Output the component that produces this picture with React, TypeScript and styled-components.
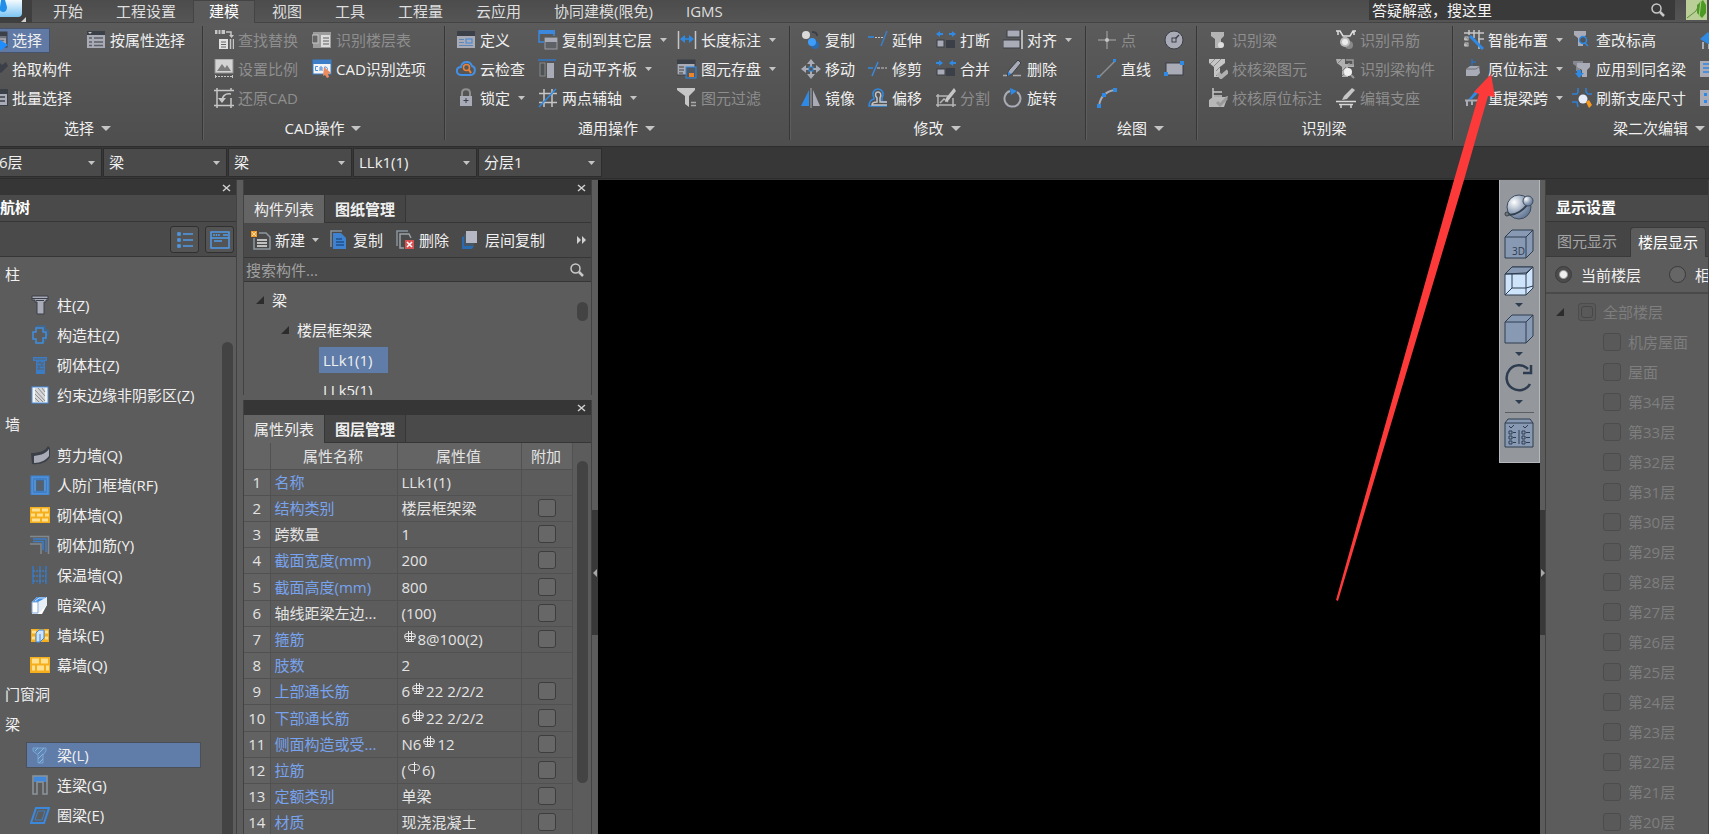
import React from "react";
import styled, { createGlobalStyle, css } from "styled-components";

const GlobalStyle = createGlobalStyle`
  *, *::before, *::after { box-sizing: border-box; }
  body {
    margin: 0;
    overflow: hidden;
    background: #373737;
    color: #f0f0f0;
    font: 15px/20px "Open Sans", "Noto Sans CJK SC", sans-serif;
  }
  button, input, select { font: inherit; color: inherit; margin: 0; }
  ul { list-style: none; margin: 0; padding: 0; }
  svg { display: block; flex: none; }
`;

/* ---------- icons ---------- */

const G = "#a9abb6";
const L = "#c6c6c6";
const B = "#2f8ae6";
const D = "#3b3f47";
const Y = "#f5ae1c";

const line = (d: string, stroke = L, w = 1.5) => (
  <path d={d} fill="none" stroke={stroke} strokeWidth={w} />
);
const box = (x: number, y: number, w: number, h: number, fill = G, stroke = "none") => (
  <rect x={x} y={y} width={w} height={h} fill={fill} stroke={stroke} />
);

const icons: Record<string, React.ReactNode> = {
  pick: (
    <>
      {box(0, 2, 19, 15, "#6c7078", D)}
      {box(0, 2, 19, 4, D)}
      {line("M2 9h16M10 12h8M17 9v6", G)}
      <path d="M12 10l8 5-8 6z" fill="#1e8dff" />
    </>
  ),
  brush: (
    <path d="M0 19l7-9 3 3-8 7zM8 8l3-5 3 3 4-3 2 4-4 4-3 3-5-4z" fill={D} />
  ),
  batch: (
    <>
      {box(0, 1, 20, 17, D)}
      {box(0, 6, 19, 11)}
      {line("M0 9h17M0 13h17", D)}
    </>
  ),
  props: (
    <>
      {box(1, 1, 18, 17, G)}
      {box(1, 1, 18, 4, D)}
      {line("M3 8h3M8 8h9M3 12h3M8 12h9M3 15.500h3M8 15.500h9", "#5c5f66")}
      <path d="M2 2h4L4 4z" fill={L} />
    </>
  ),
  replace: (
    <>
      {box(1, 0, 10, 4, L)}
      {line("M4 0v4M7 0v4", "#777")}
      {line("M12 2h5v4")}
      <path d="M15 5h5l-2.500 3z" fill={L} />
      {box(5, 9, 9, 10, "#e2e2e2")}
      {line("M7 12h5M7 14.500h5M7 17h5", "#666", 1)}
      {line("M16.500 9v10M19.500 9v10")}
    </>
  ),
  scale: (
    <>
      {box(1, 0, 18, 14, "#d4d4d4", "#8f8f8f")}
      <path d="M3 12l5-7 3 4 2-3 4 6z" fill="#7d7d7d" />
      <path d="M1 17.500h18" stroke={L} strokeDasharray="2 1" />
      {line("M1.500 16v3M18.500 16v3", L, 1)}
    </>
  ),
  restore: (
    <>
      {line("M3 0v20M0 2.500h20M0 17.500h20M17 10v10M17 0v3", L, 1.5)}
      {line("M8 14c0-6 3-9 9-8")}
      <path d="M4 10h8l-4 5z" fill={L} />
    </>
  ),
  floorTable: (
    <>
      {box(1, 2, 18, 16, "#9c9c9c")}
      {box(9, 5, 9, 12, "#dcdcdc")}
      {line("M11 8h6M11 11h6M11 14h6", "#888")}
      {box(0, 5, 6, 8, "#666", L)}
    </>
  ),
  cad: (
    <>
      {box(1, 1, 18, 14, "#f4f4f4", "#3c7fc8")}
      {box(1, 1, 18, 4, "#3c7fc8")}
      {line("M6 7.500H3.500v4H6M8 12V8h2v4M8 10h2M12.500 8h1.500c2 1 2 3 0 4h-1.500z", "#4a90e2", 1)}
      <path d="M12 8l7 6-3 1 1 3-2 1-2-3-2 1z" fill="#ec8b5e" />
    </>
  ),
  define: (
    <>
      {box(1, 1, 18, 17, G)}
      {box(1, 1, 18, 5, D)}
      {line("M3 9.500h5M3 12.500h5M3 15.500h14", "#5e87b8", 1)}
      {box(10, 9, 6, 4, "none", "#3c88dd")}
    </>
  ),
  cloud: (
    <>
      {line("M5 16c-6-1-5-8 0-8 1-6 9-7 11-1 4 1 4 8-1 9z", "#4390e6", 2)}
      <circle cx="10.500" cy="8.500" r="3" fill="none" stroke="#f08336" strokeWidth="1.500" />
      {line("M13 11l2 3", "#f08336", 2)}
    </>
  ),
  lock: (
    <>
      {line("M6 8V5c0-5 8-5 8 0v3", "#909090", 2)}
      {box(4, 8, 12, 10)}
      {line("M10 10v5M7.500 12.500h5", D, 1)}
    </>
  ),
  copyFloor: (
    <>
      {line("M6 12H1V1h15v5", "#3c88dd", 1.5)}
      {box(1, 0, 16, 4, "#3c88dd")}
      {box(7, 8, 12, 11, "#5e6266", "#9a9ca5")}
      {box(7, 8, 12, 4, G)}
    </>
  ),
  alignSlab: (
    <>
      {line("M0 1h18", "#2e77c8")}
      {box(2, 4, 5, 13, "#505356", "#888")}
      {box(9, 4, 7, 15)}
    </>
  ),
  axis: (
    <>
      {line("M6 1v18M14 1v18M1 5.500h18M1 14.500h18", L)}
      {line("M1 19L18 1", B)}
    </>
  ),
  length: (
    <>
      {line("M1.500 1v18M18.500 1v18", L)}
      {line("M5 9h10", B)}
      <path d="M3 9l5-4v8zM17 9l-5-4v8z" fill={B} />
    </>
  ),
  save: (
    <>
      {box(0, 1, 18, 15, G, D)}
      {box(0, 1, 18, 4, D)}
      {line("M2 8h5M2 11h5M2 14h4", "#666")}
      {box(9, 8, 10, 11, "#4f5a66", B)}
      {box(12, 14, 5, 4, "#f08326")}
    </>
  ),
  filter: (
    <>
      <path d="M0 0h18v2l-6 6v11l-4-3V8L0 2z" fill={L} />
      {line("M14 14.500h5M14 17.500h5", "#aaa")}
    </>
  ),
  copyBalls: (
    <>
      <circle cx="5" cy="5" r="4" fill="#dadada" />
      {line("M11 2c4 0 5 1 5 4", D, 2)}
      <circle cx="14" cy="15" r="4" fill="#2a6bb0" />
      <circle cx="11" cy="12" r="4" fill="#3f9dfa" />
    </>
  ),
  move: (
    <>
      <path d="M10 0l4 5h-3v3H9V5H6zM10 20l4-5h-3v-3H9v3H6zM0 10l5-4v3h3v2H5v3zM20 10l-5-4v3h-3v2h3v3z" fill={G} />
      {box(8, 8, 4, 4, "#555", B)}
    </>
  ),
  mirror: (
    <>
      <path d="M8 2v16H0z" fill={B} />
      <path d="M12 2v16h7z" fill={G} />
      {line("M10 0v20", "#aaa", 1)}
    </>
  ),
  extend: (
    <>
      {line("M0 7h6", B)}
      <path d="M7 7.500h10" stroke={L} strokeDasharray="2 1" />
      {line("M19 1l-6 15", "#3c7fc8")}
    </>
  ),
  trim: (
    <>
      {line("M0 9h5", B)}
      {line("M10 3L4 17", "#3c88dd")}
      <path d="M9 9h10" stroke={L} strokeDasharray="3 1" />
    </>
  ),
  offset: (
    <>
      {line("M19 14h-5v-4c3-6-1-9-4-9s-7 3-4 9v1c-4 1-5 3-5 7h18", B)}
      {line("M19 17H4c0-2 1-3 5-3v-4c-3-4-1-6 1-6s4 2 2 6v4h7", L)}
    </>
  ),
  breakIt: (
    <>
      <path d="M0 4l4-3v2h3v2H4v2zM20 4l-4-3v2h-3v2h3v2z" fill={B} />
      {box(1, 10, 7, 7, G, D)}
      {box(10, 10, 9, 8, D)}
    </>
  ),
  merge: (
    <>
      <path d="M7 4L3 1v2H0v2h3v2zM13 4l4-3v2h3v2h-3v2z" fill={B} />
      {box(1, 10, 8, 6, G, D)}
      {box(10, 9, 9, 8, D)}
    </>
  ),
  split: (
    <>
      {line("M2 6v13M0 8h12M0 17h20M17 10v9M4 15l4-4 4 3", "#b5b5b5")}
      <path d="M18 0l2 3-8 10-3 1 1-4z" fill={L} />
    </>
  ),
  align: (
    <>
      {box(4, 0, 13, 7, G, D)}
      {box(0, 10, 17, 8, G, D)}
      {line("M19 0v19", "#d5d5d5")}
    </>
  ),
  erase: (
    <>
      <path d="M15 1l3 3-9 11-5 2 2-6z" fill={G} stroke={D} />
      <path d="M5 12l3 3-3 2z" fill={B} />
      {line("M0 16.500h4M10 16.500h8", "#aaa")}
    </>
  ),
  rotate: (
    <>
      {line("M7 3a8 8 0 1 0 7 1", G, 2)}
      <path d="M7 0l7 3-6 4z" fill={B} />
    </>
  ),
  point: (
    <>
      {line("M10 1v18M1 10h18", "#909090")}
      <circle cx="10" cy="10" r="2" fill={L} />
    </>
  ),
  lineTool: (
    <>
      {line("M2 18L18 2", "#8c8f94")}
      {box(0, 16, 3, 3, B)}
      {box(16, 0, 3, 3, B)}
    </>
  ),
  arc: (
    <>
      {line("M2 18C3 9 9 3 18 2", G, 2)}
      {box(0, 16, 4, 4, B)}
      {box(5, 5, 4, 4, B)}
      {box(16, 0, 4, 4, B)}
    </>
  ),
  circle: (
    <>
      <circle cx="10" cy="10" r="9" fill={G} stroke={D} />
      {line("M10 10l5-5", D)}
      {box(8, 8, 4, 4, G, D)}
    </>
  ),
  rect: (
    <>
      {box(2, 4, 17, 12, G, D)}
      {box(0, 13, 4, 4, B)}
      {box(16, 2, 4, 4, B)}
    </>
  ),
  idBeam: (
    <>
      <path d="M3 2h13v4l-3 3v9H7V9L3 6z" fill="#b4b4b4" />
      <circle cx="13" cy="15" r="3" fill="#dedede" />
    </>
  ),
  checkBeam: (
    <>
      <path d="M1 0h16v4l-5 4v10H6V8L1 4z" fill={L} />
      {line("M2 5l5-5M6 7l7-7M8 12l5-5M8 17l4-4", "#8a8a8a", 1)}
      {line("M10 14l3 4 7-6", "#b0b0b0", 4)}
    </>
  ),
  checkMark: (
    <>
      {line("M5 0v11M5 4h9M5 8h9", L)}
      <path d="M1 12l4-3h12l3-1-4 11H1z" fill="#b8b8b8" />
      {line("M9 14l3 3 7-7", "#9a9a9a", 3)}
    </>
  ),
  idHanger: (
    <>
      {line("M0 1h4l3 5h7l3-5h3M2 1v4M18 1v4", "#dedede")}
      <circle cx="13" cy="15" r="4" fill="#8a8a8a" />
      <circle cx="9" cy="12" r="5" fill="#bdbdbd" />
      <circle cx="9" cy="12" r="3" fill="#ececec" />
    </>
  ),
  idMember: (
    <>
      <path d="M0 0h9v5h9v3h-6v10H6V8L1 4z" fill="#b0b0b0" />
      {line("M10 1h7v5h-4V4", "#9a9a9a")}
      {line("M1 5l5-5M6 12l4-4M6 17l4-4", "#7e7e7e", 1)}
      <circle cx="12" cy="13" r="4" fill="#efefef" />
      {line("M15 16l3 3", "#9a9a9a", 2)}
    </>
  ),
  support: (
    <>
      <path d="M16 0l3 2-8 9-5 1 2-4z" fill={L} />
      {line("M0 13.500h20M3 16.500h14M5 16v4M15 16v4", "#d8d8d8")}
    </>
  ),
  smart: (
    <>
      {line("M5 0v5M10 0v5M15 0v19M0 3h20M0 9h3M14 9h6M0 15h3M10 0v8", L)}
      {box(1, 7, 3, 3, "none", L)}
      {box(1, 13, 3, 3, "none", L)}
      {line("M6 6l13 13", B, 3)}
    </>
  ),
  origin: (
    <>
      {line("M8 0v8M8 3h4", "#2f6fb5")}
      <path d="M2 10l4-3h9l1 7-3 3H2z" fill={G} />
      <path d="M2 10h10l4-3" fill="none" stroke="#6d7078" />
    </>
  ),
  respan: (
    <>
      <path d="M14 0l3 2-9 9-4 1z" fill={B} />
      {line("M1 12.500h18M3 13v5M8 13v4M14 13v5", G, 2)}
    </>
  ),
  elevation: (
    <>
      <path d="M2 1h12v4l-3 3v8H6V8L2 5z" fill={G} />
      <circle cx="11" cy="10" r="3.500" fill="#4f555c" stroke={B} strokeWidth="1.500" />
      {line("M13 13l3 3", B)}
    </>
  ),
  applySame: (
    <>
      <path d="M1 2h10v3l-3 2v5H4V7L1 5z" fill="#858890" />
      <path d="M5 4h13v4l-3 3v7h-5v-7L5 8z" fill={G} />
      <path d="M5 11h4v3h3l-5 5-4-5h2z" fill={B} />
    </>
  ),
  refresh: (
    <>
      {line("M6 0v4l-1 2H0M14 0v4l2 2h4M0 14h5l1 5", "#2f7fd6")}
      <circle cx="11" cy="11" r="4.500" fill="#e6ecfa" />
      <path d="M14 14l3-2 3 5-3 3z" fill="#f79a1e" />
    </>
  ),
  wing: (
    <>
      <path d="M0 9l8-7 7 8-5 5z" fill={B} />
      {line("M3 12v7M9 14v5", G, 2)}
    </>
  ),
  sheet: (
    <>
      {box(0, 2, 16, 16, G)}
      {line("M3 5h13M3 9h13M3 13h13", "#4d8fd8", 2)}
    </>
  ),
  dots: (
    <>
      {box(0, 2, 16, 16, G)}
      {box(4, 5, 3, 3, B)}
      {box(4, 12, 3, 3, B)}
    </>
  ),
  column: (
    <>
      <path d="M2 1h16v4h-2v2h-2v12H7V7H5V5H2z" fill={G} stroke={D} />
      {line("M2 3.500h16M6 5.500h8", D, 1)}
    </>
  ),
  structColumn: (
    <>
      {line("M7 3V1h8v4h3v5h-2v5l-2 2", "#2f6fb5", 1)}
      {line("M6 3h7v4h3v6h-3v5H6v-4H3V7h3z", "#3f8fe0", 1.5)}
    </>
  ),
  brickColumn: (
    <>
      <path d="M3 2h14v4h-2v13H6V6H3z" fill="#3b7cc4" />
      {line("M4 4h12M7 8h7M7 11h7M7 14h7M10 6v2M12 8v3M9 11v3", "#59636d", 1)}
    </>
  ),
  region: (
    <>
      {box(2, 2, 16, 16, "#f4f4f4", "#4a90e2")}
      {box(5, 3, 10, 14, "#d5d7d9")}
      {line("M5 5l10 11M5 9l8 8M5 13l4 4M8 3l7 8M12 3l3 4", "#8b8f93", 1)}
    </>
  ),
  shearWall: (
    <>
      <path d="M1 8c9 0 14-2 17-7l2 2v9c-3 5-9 8-18 7z" fill={D} />
      <path d="M4 11c8-1 12-3 15-7v7c-3 4-8 7-15 7z" fill={G} />
    </>
  ),
  civilWall: (
    <>
      {box(1, 1, 18, 19, "#4f8fd8", "#3d82d1")}
      {box(4, 4, 12, 13, "#7fb0e6", "#2f6fb5")}
      {box(6, 5, 8, 11, "#58606a", "#2f6fb5")}
    </>
  ),
  brickWall: (
    <>
      {box(0, 2, 20, 16, Y)}
      {line("M2 5h8M12 5h6M1 10h4M7 10h6M15 10h4M2 15h8M12 15h6", "#ffe08f", 3)}
    </>
  ),
  brickRebar: (
    <>
      {line("M0 1.500h18.500V19", "#80888f", 1.5)}
      {line("M3 4h13v13M3 6.500h10V15", "#3c7fc8", 1.5)}
      {line("M0 9h11v10", "#80888f", 1.5)}
    </>
  ),
  insulation: (
    <>
      {line("M3 1v18M10 1v18M16 1v18", "#2f77c8")}
      <path d="M3 6h13M3 11h13M3 16h13" stroke="#3c88dd" strokeDasharray="2 1" />
    </>
  ),
  hiddenBeam: (
    <>
      <path d="M2 7l5-5h10v8l-5 9H2z" fill="#fff" />
      <path d="M2 7l5-5h10l-5 5H2z" fill="#4390e6" />
      <path d="M8 7l9-5v8l-8 8z" fill="#e8eef6" />
      <path d="M2 7h6v11H2z" fill="#fff" stroke="#7fa9d9" />
      {line("M5 6l4-3h6", "#cfe1f7", 1)}
    </>
  ),
  pier: (
    <>
      {box(1, 4, 18, 13, Y)}
      {line("M2 7h4M15 7h3M2 13h3M15 13h3", "#ffe08f", 3)}
      <path d="M6 8l3-3h5v8l-4 4H6z" fill="#cfe3fa" stroke="#3c88dd" />
      {line("M10 9v8", "#3c88dd", 1)}
    </>
  ),
  curtainWall: (
    <>
      {box(0, 2, 20, 16, Y)}
      {line("M2 6h7M11 6h7M2 13h3M7 13h7M16 13h3", "#ffe08f", 5)}
    </>
  ),
  beam: (
    <>
      <path d="M3 3h13v3l-3 4v8H8v-8L3 6z" fill="#5f86b4" stroke="#78a6d4" />
      {line("M5 6l3-3M8 9l6-6M8 14l5-5M9 18l4-4", "#8fb4da", 1)}
    </>
  ),
  linkBeam: (
    <>
      {box(4, 1, 13, 6, "#3f88dc")}
      {line("M3 19V1h14v18h-4V7H7v12z", "#8b949c", 1.5)}
    </>
  ),
  ringBeam: (
    <>
      {line("M6 3h13l-5 15H1z", "#3c88dd", 2)}
      {line("M8 6h7l-3 9H5z", "#3c7fc8", 1)}
    </>
  ),
  newDoc: (
    <>
      {line("M8 3h7l4 4v12H3V8", "#8f989e", 1.5)}
      {line("M6 10h10M6 13h10M6 16h10", "#e8e8e8")}
      {box(0, 1, 6, 6, "#f59b23")}
      {line("M1 2l4 4M5 2L1 6", "#ffe0ae", 1)}
    </>
  ),
  copyDoc: (
    <>
      {line("M2 17V1h11", "#87929b", 1.5)}
      <path d="M4 3h8l5 5v11H4z" fill="#3d83d2" />
      {line("M7 9h6M7 12h8M7 15h8", "#1f4f8a")}
    </>
  ),
  deleteDoc: (
    <>
      {line("M2 16V1h11", "#87929b", 1.5)}
      {line("M9 18H5V4h9l2 4", "#9aa1a7", 1.5)}
      {box(10, 10, 9, 9, "#d8504f")}
      {line("M12 12l5 5M17 12l-5 5", "#fff")}
    </>
  ),
  floorCopy: (
    <>
      <path d="M1 7l3-1v10h9l-2 3H1z" fill="#2a6bb0" />
      {box(3, 4, 10, 12, "#465665")}
      {box(5, 1, 11, 12, "#b5b8c4")}
    </>
  ),
};

const Icon = ({ name }: { name: string }) => (
  <svg width="20" height="20" viewBox="0 0 20 20" aria-hidden="true">
    {icons[name]}
  </svg>
);

const Caret = ({ wide }: { wide?: boolean }) => (
  <svg width={wide ? 10 : 7} height={wide ? 5 : 4} viewBox="0 0 10 5" preserveAspectRatio="none" aria-hidden="true">
    <path d="M0 0h10L5 5z" fill="#c4c4c4" />
  </svg>
);

const Magnifier = () => (
  <svg width="14" height="14" viewBox="0 0 14 14" aria-hidden="true">
    <circle cx="5.500" cy="5.500" r="4.500" fill="none" stroke="#c8c8c8" strokeWidth="1.500" />
    <path d="M9 9l4 4" stroke="#c8c8c8" strokeWidth="2.500" />
  </svg>
);

const Expander = () => (
  <svg width="8" height="8" viewBox="0 0 8 8" aria-hidden="true">
    <path d="M8 0v8H0z" fill="#2c2c2c" />
  </svg>
);

const RebarMark = styled.svg`
  display: inline-block;
  vertical-align: 1px;
`;

/* Rebar grade sign: a barred ring, with a foot stroke for ribbed steel. */
const Rebar = ({ single }: { single?: boolean }) => (
  <RebarMark width="16" height="13" viewBox="0 0 16 13" fill="none" stroke="#e8e8e8" role="img" aria-label="钢筋">
    <rect x="2.500" y="2.500" width="11" height="6" rx="3" />
    {single ? <path d="M8.500 0v12" /> : <path d="M6.500 0v11M9.500 0v11M3 5.500h10M4 10.500h8" />}
  </RebarMark>
);

/* ---------- shell ---------- */

const Window = styled.div`
  display: flex;
  flex-direction: column;
  height: 100vh;
  margin-left: -26px;
  overflow: hidden;
`;

const plainButton = css`
  display: flex;
  align-items: center;
  border: 0;
  padding: 0;
  background: none;
  white-space: nowrap;
`;

/* ---------- tab bar ---------- */

const TabBar = styled.header`
  display: flex;
  height: 23px;
  flex: none;
  padding-left: 26px;
  background: linear-gradient(#4c4c4c, #555);
  border-bottom: 1px solid #444;
`;

const AppButton = styled.button`
  ${plainButton}
  align-items: flex-start;
  width: 32px;
  height: 26px;
  margin-right: 5px;
  background: #3f3f3f;
`;

const TabList = styled.nav`
  display: flex;
  gap: 1px;
  flex: 1;
`;

const RibbonTab = styled.button<{ $active?: boolean }>`
  ${plainButton}
  height: 23px;
  padding: 0 16px 2px;
  color: ${(p) => (p.$active ? "#fff" : "#dedede")};
  ${(p) =>
    p.$active &&
    css`
      background: #5a5a5a;
      box-shadow: inset 1px 1px #444, inset -1px 0 #444;
    `}
`;

const HelpSearch = styled.label`
  display: flex;
  align-items: center;
  width: 306px;
  height: 20px;
  padding: 0 10px 0 3px;
  background: #3a3a3a;
  input {
    flex: 1;
    min-width: 0;
    border: 0;
    padding: 0;
    background: none;
    outline: 0;
    &::placeholder { color: #f4f4f4; opacity: 1; }
  }
`;

const Avatar = styled.button`
  ${plainButton}
  height: 20px;
  margin: 0 2px 0 11px;
`;

/* ---------- ribbon ---------- */

const Ribbon = styled.section`
  display: flex;
  height: 123px;
  flex: none;
  padding: 3px 0 6px;
  background: linear-gradient(#5b5b5b, #4e4e4e);
`;

const Group = styled.section<{ $width: number }>`
  display: flex;
  flex-direction: column;
  flex: none;
  width: ${(p) => p.$width}px;
  padding-left: 8px;
  border-right: 1px solid #373737;
  box-shadow: 1px 0 #5e5e5e;
`;

const GroupGrid = styled.div<{ $cols: string; $inset?: number }>`
  display: grid;
  grid-auto-flow: column;
  grid-template-rows: repeat(3, 29px);
  grid-template-columns: ${(p) => p.$cols};
  align-items: center;
  justify-items: start;
  padding-left: ${(p) => p.$inset ?? 0}px;
`;

const GroupTitle = styled.button`
  ${plainButton}
  align-self: center;
  gap: 7px;
  height: 26px;
  padding: 4px 9px 0 0;
`;

const Tool = styled.button<{ $active?: boolean }>`
  ${plainButton}
  height: 23px;
  padding: 0 7px 1px 3px;
  gap: 4px;
  background: ${(p) => (p.$active ? "#607aa5" : "none")};
  box-shadow: ${(p) => (p.$active ? "0 0 0 1px #46536a" : "none")};
  &:disabled { color: #8e8e8e; }
  svg:nth-of-type(2) { margin-left: 4px; }
`;

type ToolDef = { icon: string; text?: string; name?: string; off?: boolean; caret?: boolean; on?: boolean };
type GroupDef = { title: string; caret?: boolean; width: number; cols: string; inset?: number; tools: ToolDef[] };

const groups: GroupDef[] = [
  {
    title: "选择", caret: true, width: 229, cols: "98px 120px", inset: 3,
    tools: [
      { icon: "pick", text: "选择", on: true },
      { icon: "brush", text: "拾取构件" },
      { icon: "batch", text: "批量选择" },
      { icon: "props", text: "按属性选择" },
    ],
  },
  {
    title: "CAD操作", caret: true, width: 242, cols: "98px 130px",
    tools: [
      { icon: "replace", text: "查找替换", off: true },
      { icon: "scale", text: "设置比例", off: true },
      { icon: "restore", text: "还原CAD", off: true },
      { icon: "floorTable", text: "识别楼层表", off: true },
      { icon: "cad", text: "CAD识别选项" },
    ],
  },
  {
    title: "通用操作", caret: true, width: 345, cols: "82px 139px 115px",
    tools: [
      { icon: "define", text: "定义" },
      { icon: "cloud", text: "云检查" },
      { icon: "lock", text: "锁定", caret: true },
      { icon: "copyFloor", text: "复制到其它层", caret: true },
      { icon: "alignSlab", text: "自动平齐板", caret: true },
      { icon: "axis", text: "两点辅轴", caret: true },
      { icon: "length", text: "长度标注", caret: true },
      { icon: "save", text: "图元存盘", caret: true },
      { icon: "filter", text: "图元过滤", off: true },
    ],
  },
  {
    title: "修改", caret: true, width: 296, cols: "67px 68px 67px 80px",
    tools: [
      { icon: "copyBalls", text: "复制" },
      { icon: "move", text: "移动" },
      { icon: "mirror", text: "镜像" },
      { icon: "extend", text: "延伸" },
      { icon: "trim", text: "修剪" },
      { icon: "offset", text: "偏移" },
      { icon: "breakIt", text: "打断" },
      { icon: "merge", text: "合并" },
      { icon: "split", text: "分割", off: true },
      { icon: "align", text: "对齐", caret: true },
      { icon: "erase", text: "删除" },
      { icon: "rotate", text: "旋转" },
    ],
  },
  {
    title: "绘图", caret: true, width: 111, cols: "67px 30px",
    tools: [
      { icon: "point", text: "点", off: true },
      { icon: "lineTool", text: "直线" },
      { icon: "arc", name: "弧" },
      { icon: "circle", name: "圆" },
      { icon: "rect", name: "矩形" },
    ],
  },
  {
    title: "识别梁", width: 256, cols: "128px 110px",
    tools: [
      { icon: "idBeam", text: "识别梁", off: true },
      { icon: "checkBeam", text: "校核梁图元", off: true },
      { icon: "checkMark", text: "校核原位标注", off: true },
      { icon: "idHanger", text: "识别吊筋", off: true },
      { icon: "idMember", text: "识别梁构件", off: true },
      { icon: "support", text: "编辑支座", off: true },
    ],
  },
  {
    title: "梁二次编辑", caret: true, width: 414, cols: "108px 128px 30px",
    tools: [
      { icon: "smart", text: "智能布置", caret: true },
      { icon: "origin", text: "原位标注", caret: true },
      { icon: "respan", text: "重提梁跨", caret: true },
      { icon: "elevation", text: "查改标高" },
      { icon: "applySame", text: "应用到同名梁" },
      { icon: "refresh", text: "刷新支座尺寸" },
      { icon: "wing", name: "梁" },
      { icon: "sheet", name: "表" },
      { icon: "dots", name: "板" },
    ],
  },
];

/* ---------- context combos ---------- */

const ComboBar = styled.div`
  display: flex;
  flex: none;
  gap: 1px;
  height: 33px;
  padding: 1px 0 0 4px;
  background: #373737;
  border-top: 1px solid #2d2d2d;
  border-bottom: 1px solid #2d2d2d;
`;

const Combo = styled.label`
  display: grid;
  align-items: center;
  width: 124px;
  height: 29px;
  background: #4a4a4a;
  border: 1px solid #2d2d2d;
  select, svg { grid-area: 1 / 1; }
  svg { justify-self: end; margin-right: 6px; pointer-events: none; }
  select {
    appearance: none;
    width: 100%;
    border: 0;
    padding: 0 16px 2px 5px;
    background: none;
    outline: 0;
  }
`;

/* ---------- docked panels ---------- */

const Workspace = styled.main`
  display: flex;
  flex: 1;
  min-height: 0;
  padding-top: 1px;
`;

const Panel = styled.section<{ $width?: number; $grow?: boolean; $height?: number }>`
  display: flex;
  flex-direction: column;
  flex: ${(p) => (p.$grow ? "1" : "none")};
  min-height: 0;
  overflow: hidden;
  ${(p) => p.$width && `width: ${p.$width}px;`}
  ${(p) => p.$height && `height: ${p.$height}px;`}
  background: #5c5c5c;
  border: 0 solid #424242;
  border-width: 0 1px;
`;

const Dock = styled.div`
  display: flex;
  flex-direction: column;
  flex: none;
  gap: 5px;
  width: 349px;
  background: #5c5c5c;
`;

const Grip = styled.div`
  display: flex;
  justify-content: flex-end;
  align-items: center;
  flex: none;
  height: 15px;
  padding-right: 5px;
  background: #363636;
`;

const CloseButton = styled.button`
  ${plainButton}
`;

const Close = () => (
  <CloseButton aria-label="关闭">
    <svg width="9" height="8" viewBox="0 0 9 8" aria-hidden="true">
      <path d="M1 1l7 6M8 1L1 7" stroke="#d0d0d0" strokeWidth="1.500" />
    </svg>
  </CloseButton>
);

const PanelTitle = styled.h2`
  flex: none;
  height: 27px;
  margin: 0;
  padding: 2px 10px;
  background: #4a4a4a;
  border-bottom: 1px solid #363636;
  font-size: 15px;
  line-height: 20px;
  font-weight: 700;
  color: #fff;
`;

const ViewModes = styled.div`
  display: flex;
  justify-content: flex-end;
  gap: 6px;
  flex: none;
  height: 35px;
  padding: 4px 2px 0 0;
  background: #4a4a4a;
  border-bottom: 1px solid #363636;
`;

const ModeButton = styled.button`
  ${plainButton}
  justify-content: center;
  width: 29px;
  height: 27px;
  background: #545454;
  border: 1px solid #303030;
  border-radius: 3px;
`;

const ScrollArea = styled.div`
  display: flex;
  flex: 1;
  min-height: 0;
  overflow: hidden;
`;

const ScrollThumb = styled.div<{ $top: number; $height?: number; $gap: number }>`
  flex: none;
  width: 11px;
  margin: ${(p) => p.$top}px ${(p) => p.$gap}px 0 auto;
  border-radius: 6px;
  background: #434343;
  ${(p) => (p.$height ? `height: ${p.$height}px;` : "border-radius: 6px 6px 0 0;")}
`;

const NavList = styled.ul`
  flex: 1;
  padding: 3px 0 0 30px;
`;

const NavHeading = styled.li`
  height: 30px;
  padding: 4px 0;
`;

const NavItem = styled.li`
  height: 30px;
  padding: 2px 0 0 21px;
`;

const NavButton = styled.button<{ $active?: boolean }>`
  ${plainButton}
  gap: 7px;
  width: 175px;
  height: 26px;
  padding-left: 3px;
  background: ${(p) => (p.$active ? "#607ca9" : "none")};
  border: 1px solid ${(p) => (p.$active ? "#4b4f57" : "transparent")};
`;

const navTree: { head: string; items: [string, string][] }[] = [
  {
    head: "柱",
    items: [["column", "柱(Z)"], ["structColumn", "构造柱(Z)"], ["brickColumn", "砌体柱(Z)"], ["region", "约束边缘非阴影区(Z)"]],
  },
  {
    head: "墙",
    items: [
      ["shearWall", "剪力墙(Q)"], ["civilWall", "人防门框墙(RF)"], ["brickWall", "砌体墙(Q)"], ["brickRebar", "砌体加筋(Y)"],
      ["insulation", "保温墙(Q)"], ["hiddenBeam", "暗梁(A)"], ["pier", "墙垛(E)"], ["curtainWall", "幕墙(Q)"],
    ],
  },
  { head: "门窗洞", items: [] },
  { head: "梁", items: [["beam", "梁(L)"], ["linkBeam", "连梁(G)"], ["ringBeam", "圈梁(E)"]] },
];

const DockTabs = styled.div`
  display: flex;
  flex: none;
  height: 28px;
  background: #4a4a4a;
  border-bottom: 1px solid #363636;
`;

const DockTab = styled.button<{ $active?: boolean }>`
  ${plainButton}
  justify-content: center;
  width: 81px;
  height: ${(p) => (p.$active ? 28 : 27)}px;
  background: ${(p) => (p.$active ? "#646464" : "#454545")};
  border-right: 1px solid #363636;
  font-weight: ${(p) => (p.$active ? 400 : 700)};
`;

const DockToolbar = styled.div`
  display: flex;
  align-items: center;
  flex: none;
  height: 35px;
  padding: 0 4px 0 7px;
  background: #4a4a4a;
  border-bottom: 1px solid #363636;
`;

const DockTool = styled.button<{ $gap?: number }>`
  ${plainButton}
  gap: 4px;
  margin-right: ${(p) => p.$gap ?? 12}px;
  svg:nth-of-type(2) { margin-left: 3px; }
`;

const Overflow = styled.button`
  ${plainButton}
  margin-left: auto;
`;

const SearchField = styled.label`
  display: flex;
  align-items: center;
  flex: none;
  height: 24px;
  padding: 0 7px 0 2px;
  background: #4a4a4a;
  border-bottom: 1px solid #363636;
  input {
    flex: 1;
    border: 0;
    padding: 0;
    background: none;
    outline: 0;
    &::placeholder { color: #a0a0a0; opacity: 1; }
  }
`;

const Tree = styled.ul`
  flex: 1;
  padding-top: 3px;
`;

const TreeRow = styled.li<{ $indent: number }>`
  display: flex;
  align-items: center;
  gap: 8px;
  height: 30px;
  padding-left: ${(p) => p.$indent}px;
`;

const TreeLeaf = styled.button<{ $active?: boolean }>`
  ${plainButton}
  width: 69px;
  height: 26px;
  padding-left: 4px;
  background: ${(p) => (p.$active ? "#607ca9" : "none")};
`;

/* ---------- property table ---------- */

const PropTable = styled.table`
  flex: none;
  width: 328px;
  border-collapse: collapse;
  table-layout: fixed;
  align-self: flex-start;
  th, td {
    height: 26px;
    padding: 0 5px 0 4px;
    border-right: 1px solid #515151;
    border-bottom: 1px solid #515151;
    font-weight: 400;
    text-align: left;
    white-space: nowrap;
    overflow: hidden;
    color: #e4e4e4;
  }
  tr:nth-child(5n) td { height: 27px; }
  thead th { background: #646464; text-align: center; }
  tbody th { background: #626262; text-align: center; padding: 0; }
  td:last-child { padding: 0 7px; }
`;

const NameCell = styled.td<{ $blue?: boolean }>`
  && { color: ${(p) => (p.$blue ? "#78a3ee" : "#e4e4e4")}; }
`;

const Check = styled.input.attrs({ type: "checkbox" })<{ $faint?: boolean; $mixed?: boolean }>`
  appearance: none;
  display: grid;
  place-items: center;
  flex: none;
  width: 18px;
  height: 18px;
  margin: 0 auto;
  border: 1px solid ${(p) => (p.$faint ? "#4c4c4c" : "#3d3d3d")};
  border-radius: 3px;
  background: ${(p) => (p.$faint ? "#595959" : "#676767")};
  ${(p) =>
    p.$mixed &&
    css`
      &::before {
        content: "";
        width: 12px;
        height: 12px;
        border: 1px solid #474747;
        border-radius: 3px;
      }
    `}
`;

const props: { name: string; value: React.ReactNode; blue?: boolean; check?: boolean }[] = [
  { name: "名称", value: "LLk1(1)", blue: true },
  { name: "结构类别", value: "楼层框架梁", blue: true, check: true },
  { name: "跨数量", value: "1", check: true },
  { name: "截面宽度(mm)", value: "200", blue: true, check: true },
  { name: "截面高度(mm)", value: "800", blue: true, check: true },
  { name: "轴线距梁左边...", value: "(100)", check: true },
  { name: "箍筋", value: <><Rebar />8@100(2)</>, blue: true, check: true },
  { name: "肢数", value: "2", blue: true },
  { name: "上部通长筋", value: <>6<Rebar />22 2/2/2</>, blue: true, check: true },
  { name: "下部通长筋", value: <>6<Rebar />22 2/2/2</>, blue: true, check: true },
  { name: "侧面构造或受...", value: <>N6<Rebar />12</>, blue: true, check: true },
  { name: "拉筋", value: <>(<Rebar single />6)</>, blue: true, check: true },
  { name: "定额类别", value: "单梁", blue: true, check: true },
  { name: "材质", value: "现浇混凝土", blue: true, check: true },
];

/* ---------- splitters and viewport ---------- */

const Splitter = styled.div<{ $width: number }>`
  display: flex;
  align-items: center;
  flex: none;
  width: ${(p) => p.$width}px;
  background: #5c5c5c;
`;

const SplitHandle = styled.button`
  ${plainButton}
  justify-content: center;
  width: 100%;
  height: 125px;
  margin-top: 131px;
  background: #383838;
`;

const Viewport = styled.div`
  display: flex;
  justify-content: flex-end;
  align-items: flex-start;
  flex: 1;
  min-width: 0;
  background: #000;
`;

const ViewTools = styled.div`
  display: flex;
  flex-direction: column;
  align-items: center;
  width: 41px;
  height: 283px;
  padding: 9px 1px 0 0;
  background: #94979c;
  border: 1px solid #b4b7bb;
  border-top: 0;
`;

const ViewTool = styled.button<{ $h: number }>`
  ${plainButton}
  height: ${(p) => p.$h}px;
`;

const ToolRule = styled.hr`
  width: 29px;
  height: 1px;
  margin: 3px 0 4px;
  border: 0;
  background: #5b5e63;
`;

const steel = "#8799b3";
const ink = "#2e3c4f";

const Cube = ({ glass, label }: { glass?: boolean; label?: string }) => (
  <svg width="30" height="30" viewBox="0 0 30 30" aria-hidden="true">
    <path d="M1 8l7-7h21v21l-7 7H1z" fill={glass ? "#cde4fb" : steel} stroke={ink} />
    {glass && <path d="M1 8l7-7h21l-7 6z" fill={steel} stroke={ink} />}
    <path d="M1 8h21v21M22 8l7-7" fill="none" stroke={ink} />
    {glass && <path d="M8 8v14h14M8 22l-7 7M22 22l7-2" fill="none" stroke={ink} />}
    {label && (
      <text x="8" y="26" fontSize="10" fontFamily="Open Sans, sans-serif" fill={ink}>
        {label}
      </text>
    )}
  </svg>
);

const DarkCaret = () => (
  <svg width="8" height="4" viewBox="0 0 8 4" aria-hidden="true">
    <path d="M0 0h8L4 4z" fill={ink} />
  </svg>
);

/* ---------- display settings ---------- */

const SettingsTabs = styled.div`
  display: flex;
  align-items: flex-end;
  flex: none;
  height: 35px;
  background: #454545;
  box-shadow: inset 0 -1px #3a3a3a;
`;

const SettingsTab = styled.button<{ $active?: boolean }>`
  ${plainButton}
  height: 30px;
  padding: 0 7px 2px;
  border-radius: 4px 4px 0 0;
  color: ${(p) => (p.$active ? "#fff" : "#a4a4a4")};
  ${(p) =>
    p.$active
      ? css`
          background: #5c5c5c;
          border: 1px solid #3a3a3a;
          border-bottom: 0;
        `
      : css`
          width: 84px;
          padding-left: 11px;
        `}
`;

const ScopeRow = styled.div`
  display: flex;
  align-items: center;
  gap: 28px;
  flex: none;
  height: 37px;
  padding-left: 9px;
  border-bottom: 2px solid #4a4a4a;
`;

const ScopeOption = styled.label`
  display: flex;
  align-items: center;
  gap: 9px;
  flex: none;
  input {
    appearance: none;
    width: 17px;
    height: 17px;
    border: 1px solid #3a3a3a;
    border-radius: 50%;
    background: #666;
  }
  input:checked {
    background: radial-gradient(circle, #f0f0f0 0 3px, #4c4c4c 5px);
  }
`;

const FloorList = styled.ul`
  padding-top: 3px;
`;

const FloorRow = styled.li<{ $root?: boolean }>`
  display: flex;
  align-items: center;
  gap: 14px;
  height: 30px;
  padding-left: ${(p) => (p.$root ? 10 : 57)}px;
`;

const FloorLabel = styled.label`
  display: flex;
  align-items: center;
  gap: 7px;
  color: #7e7e7e;
`;

const floors = ["机房屋面", "屋面", ...Array.from({ length: 15 }, (_, i) => `第${34 - i}层`)];

/* Red pointer laid over the ribbon and the model view. */
const Pointer = styled.svg`
  position: absolute;
  left: 1336px;
  top: 74px;
  pointer-events: none;
`;

export default function App() {
  return (
    <>
      <GlobalStyle />
      <Window>
        <TabBar>
          <AppButton aria-label="应用菜单">
            <svg width="28" height="24" viewBox="0 0 28 24" aria-hidden="true">
              <defs>
                <linearGradient id="drop" x1="0" y1="0" x2="0" y2="1">
                  <stop offset="0" stopColor="#f4fbff" />
                  <stop offset="1" stopColor="#7cc4f2" />
                </linearGradient>
              </defs>
              <path d="M0 0h22v13q0 4-4 4H0z" fill="url(#drop)" />
              <path d="M1 0h4l2 7q0 5-4 5t-3-5z" fill="#1f8fe8" />
              <path d="M26 17v5h-5z" fill="#d0d0d0" />
            </svg>
          </AppButton>
          <TabList aria-label="功能区">
            {["开始", "工程设置", "建模", "视图", "工具", "工程量", "云应用", "协同建模(限免)", "IGMS"].map((t) => (
              <RibbonTab key={t} $active={t === "建模"}>{t}</RibbonTab>
            ))}
          </TabList>
          <HelpSearch>
            <input placeholder="答疑解惑，搜这里" aria-label="答疑解惑，搜这里" />
            <Magnifier />
          </HelpSearch>
          <Avatar aria-label="账户">
            <svg width="21" height="20" viewBox="0 0 21 20" aria-hidden="true">
              <path d="M0 0h21v20H0z" fill="#b9cf97" />
              <path d="M11 5l6-5 3 5v8l-4 5-5-5z" fill="#4c9a24" />
              <path d="M1 18l9-7 5-10" fill="none" stroke="#5d8d3c" />
              <path d="M13 17l2-17" stroke="#a5d37c" />
            </svg>
          </Avatar>
        </TabBar>

        <Ribbon>
          {groups.map((g) => (
            <Group key={g.title} $width={g.width} aria-label={g.title}>
              <GroupGrid $cols={g.cols} $inset={g.inset}>
                {g.tools.map((t) => (
                  <Tool key={t.icon} disabled={t.off} $active={t.on} aria-label={t.name}>
                    <Icon name={t.icon} />
                    {t.text}
                    {t.caret && <Caret />}
                  </Tool>
                ))}
              </GroupGrid>
              <GroupTitle>
                {g.title}
                {g.caret && <Caret wide />}
              </GroupTitle>
            </Group>
          ))}
        </Ribbon>

        <ComboBar>
          {[["楼层", "第6层"], ["构件大类", "梁"], ["构件类型", "梁"], ["构件", "LLk1(1)"], ["分层", "分层1"]].map(([name, value]) => (
            <Combo key={name}>
              <select aria-label={name}>
                <option>{value}</option>
              </select>
              <Caret />
            </Combo>
          ))}
        </ComboBar>

        <Workspace>
          <Panel as="aside" $width={263}>
            <Grip><Close /></Grip>
            <PanelTitle>导航树</PanelTitle>
            <ViewModes>
              <ModeButton aria-label="列表视图">
                <svg width="18" height="18" viewBox="0 0 18 18" fill="none" stroke="#4f9be8" strokeWidth="1.500" aria-hidden="true">
                  <path d="M2 2h2v2H2zM2 8h2v2H2zM2 14h2v2H2zM7 3h10M7 9h10M7 15h10" />
                </svg>
              </ModeButton>
              <ModeButton aria-label="窗口视图">
                <svg width="20" height="18" viewBox="0 0 20 18" fill="none" stroke="#4f9be8" strokeWidth="1.500" aria-hidden="true">
                  <path d="M1 1h18v16H1zM1 7h18M4 3v2M6.500 3v2M9 3v2M13 4h5M4 10h8" />
                </svg>
              </ModeButton>
            </ViewModes>
            <ScrollArea>
              <NavList>
                {navTree.map((section) => (
                  <React.Fragment key={section.head}>
                    <NavHeading>{section.head}</NavHeading>
                    {section.items.map(([icon, text]) => (
                      <NavItem key={text}>
                        <NavButton $active={text === "梁(L)"}>
                          <Icon name={icon} />
                          {text}
                        </NavButton>
                      </NavItem>
                    ))}
                  </React.Fragment>
                ))}
              </NavList>
              <ScrollThumb $top={85} $gap={3} />
            </ScrollArea>
          </Panel>

          <Splitter $width={6} />

          <Dock>
            <Panel $height={215}>
              <Grip><Close /></Grip>
              <DockTabs>
                <DockTab $active>构件列表</DockTab>
                <DockTab>图纸管理</DockTab>
              </DockTabs>
              <DockToolbar>
                <DockTool $gap={10}><Icon name="newDoc" />新建<Caret /></DockTool>
                <DockTool><Icon name="copyDoc" />复制</DockTool>
                <DockTool><Icon name="deleteDoc" />删除</DockTool>
                <DockTool><Icon name="floorCopy" />层间复制</DockTool>
                <Overflow aria-label="更多">
                  <svg width="10" height="8" viewBox="0 0 10 8" aria-hidden="true">
                    <path d="M0 0l4 4-4 4zM5 0l4 4-4 4z" fill="#d0d0d0" />
                  </svg>
                </Overflow>
              </DockToolbar>
              <SearchField>
                <input placeholder="搜索构件..." aria-label="搜索构件" />
                <Magnifier />
              </SearchField>
              <ScrollArea>
                <Tree>
                  <TreeRow $indent={12}><Expander />梁</TreeRow>
                  <TreeRow $indent={37}><Expander />楼层框架梁</TreeRow>
                  <TreeRow $indent={75}><TreeLeaf $active>LLk1(1)</TreeLeaf></TreeRow>
                  <TreeRow $indent={75}><TreeLeaf>LLk5(1)</TreeLeaf></TreeRow>
                </Tree>
                <ScrollThumb $top={20} $height={19} $gap={3} />
              </ScrollArea>
            </Panel>

            <Panel $grow>
              <Grip><Close /></Grip>
              <DockTabs>
                <DockTab $active>属性列表</DockTab>
                <DockTab>图层管理</DockTab>
              </DockTabs>
              <ScrollArea>
                <PropTable>
                  <colgroup>
                    <col width="26" />
                    <col width="127" />
                    <col width="124" />
                    <col width="51" />
                  </colgroup>
                  <thead>
                    <tr>
                      <th />
                      <th scope="col">属性名称</th>
                      <th scope="col">属性值</th>
                      <th scope="col">附加</th>
                    </tr>
                  </thead>
                  <tbody>
                    {props.map((p, i) => (
                      <tr key={p.name}>
                        <th scope="row">{i + 1}</th>
                        <NameCell $blue={p.blue}>{p.name}</NameCell>
                        <td>{p.value}</td>
                        <td>{p.check && <Check aria-label={`附加 ${p.name}`} />}</td>
                      </tr>
                    ))}
                  </tbody>
                </PropTable>
                <ScrollThumb $top={18} $height={322} $gap={3} />
              </ScrollArea>
            </Panel>
          </Dock>

          <Splitter $width={6}>
            <SplitHandle aria-label="折叠左侧面板">
              <svg width="4" height="8" viewBox="0 0 4 8" aria-hidden="true"><path d="M4 0v8L0 4z" fill="#a8a8a8" /></svg>
            </SplitHandle>
          </Splitter>

          <Viewport>
            <ViewTools>
              <ViewTool $h={36} aria-label="动态观察">
                <svg width="30" height="28" viewBox="0 0 30 28" aria-hidden="true">
                  <defs>
                    <radialGradient id="orb" cx="0.3" cy="0.3" r="0.8">
                      <stop offset="0" stopColor="#fff" />
                      <stop offset="0.6" stopColor="#8b9cb4" />
                      <stop offset="1" stopColor="#5c708d" />
                    </radialGradient>
                  </defs>
                  <circle cx="15" cy="14" r="12" fill="url(#orb)" stroke="#3d4c60" />
                  <path d="M3 21c8 3 18-5 22-12" fill="none" stroke="#34404f" strokeWidth="2" />
                  <circle cx="24" cy="8" r="5" fill="url(#orb)" stroke="#3d4c60" />
                  <circle cx="3" cy="21" r="2" fill="#777" stroke="#34404f" />
                </svg>
              </ViewTool>
              <ViewTool $h={38} aria-label="三维"><Cube label="3D" /></ViewTool>
              <ViewTool $h={36} aria-label="线框显示"><Cube glass /></ViewTool>
              <ViewTool $h={12} aria-label="线框选项"><DarkCaret /></ViewTool>
              <ViewTool $h={36} aria-label="实体显示"><Cube /></ViewTool>
              <ViewTool $h={14} aria-label="实体选项"><DarkCaret /></ViewTool>
              <ViewTool $h={34} aria-label="旋转视图">
                <svg width="30" height="30" viewBox="0 0 30 30" fill="none" stroke={ink} strokeWidth="2.500" aria-hidden="true">
                  <path d="M26 21A12.500 12.500 0 1 1 24 6M27 2v8h-8" />
                </svg>
              </ViewTool>
              <ViewTool $h={14} aria-label="旋转选项"><DarkCaret /></ViewTool>
              <ToolRule />
              <ViewTool $h={32} aria-label="显示设置">
                <svg width="30" height="30" viewBox="0 0 30 30" fill="none" stroke={ink} aria-hidden="true">
                  <path d="M1 5l3-4h22l3 4v24H1z" fill={steel} />
                  <path d="M1 5h28M15 12v14" />
                  <path d="M5 8l2 2 3-3M19 8l2 2 3-3M5 13h3v3H5zM5 18h3v3H5zM5 23h3v3H5zM18 13h3v3h-3zM18 18h3v3h-3zM18 23h3v3h-3zM9 14.500h3M9 19.500h3M9 24.500h3M22 14.500h4M22 19.500h4M22 24.500h4" />
                </svg>
              </ViewTool>
            </ViewTools>
          </Viewport>

          <Splitter $width={5}>
            <SplitHandle aria-label="折叠右侧面板">
              <svg width="4" height="8" viewBox="0 0 4 8" aria-hidden="true"><path d="M0 0v8l4-4z" fill="#a8a8a8" /></svg>
            </SplitHandle>
          </Splitter>

          <Panel as="aside" $width={164}>
            <Grip />
            <PanelTitle>显示设置</PanelTitle>
            <SettingsTabs>
              <SettingsTab>图元显示</SettingsTab>
              <SettingsTab $active>楼层显示</SettingsTab>
            </SettingsTabs>
            <ScopeRow role="radiogroup" aria-label="楼层范围">
              <ScopeOption><input type="radio" name="scope" defaultChecked />当前楼层</ScopeOption>
              <ScopeOption><input type="radio" name="scope" />相</ScopeOption>
            </ScopeRow>
            <FloorList>
              <FloorRow $root>
                <Expander />
                <FloorLabel><Check disabled $faint $mixed />全部楼层</FloorLabel>
              </FloorRow>
              {floors.map((f) => (
                <FloorRow key={f}>
                  <FloorLabel><Check disabled $faint />{f}</FloorLabel>
                </FloorRow>
              ))}
            </FloorList>
          </Panel>
        </Workspace>
      </Window>
      <Pointer width="160" height="528" viewBox="0 0 160 528" aria-hidden="true">
        <path d="M0 526L118 106 143 20 138 18 155 0 159 23 152 22 128 106 2 527z" fill="#fd3a3a" />
      </Pointer>
    </>
  );
}
